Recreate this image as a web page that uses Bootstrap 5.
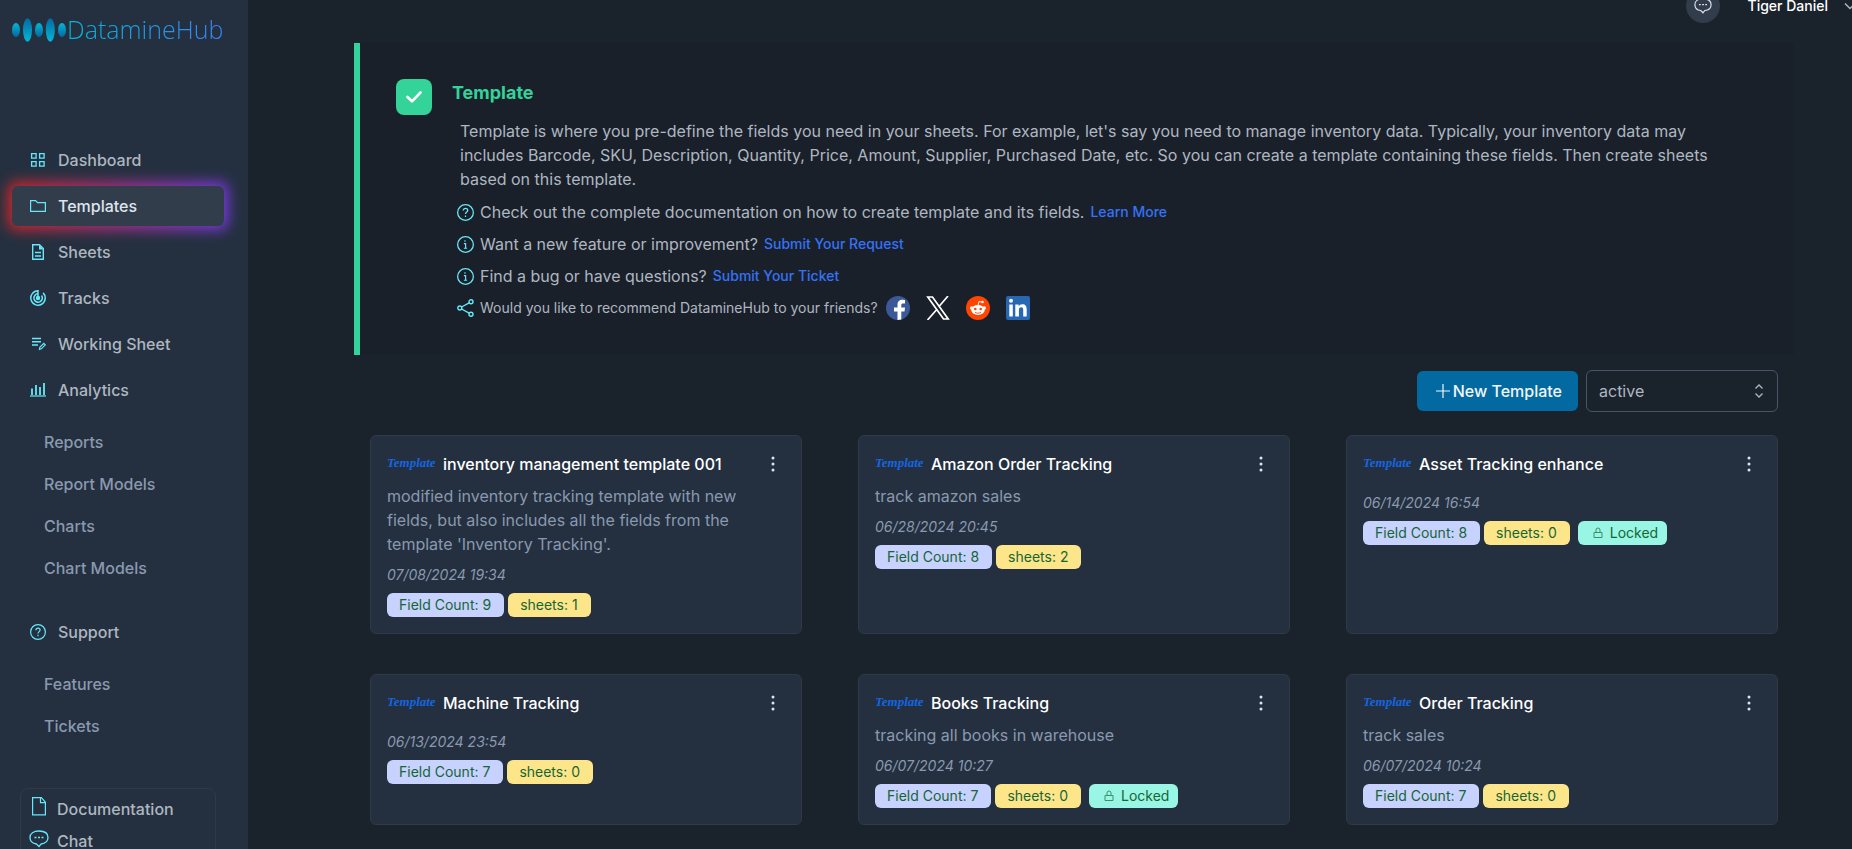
<!DOCTYPE html>
<html lang="en">
<head>
<meta charset="utf-8">
<meta name="viewport" content="width=device-width, initial-scale=1">
<title>DatamineHub – Templates</title>
<link href="https://cdn.jsdelivr.net/npm/bootstrap@5.3.0/dist/css/bootstrap.min.css" rel="stylesheet">
<style>
  body { background: #1a222c; color: #aeb7c0; font-family: Inter, "Liberation Sans", sans-serif; font-size: 16px; line-height: 24px; overflow: hidden; }
  a { text-decoration: none; }
  svg { flex: none; display: block; }
  .shell { height: 100vh; }
  .side { width: 248px; flex: none; background: #24303f; padding: 14px 12px 0; overflow: hidden; }
  .brand { height: 32px; margin-bottom: 94px; }
  .brand-name { font-family: "Open Sans", "Noto Sans", sans-serif; font-weight: 300; font-size: 25px; line-height: 30px; background: linear-gradient(to right, #06b6d4, #3b82f6); -webkit-background-clip: text; background-clip: text; color: transparent; }
  .side-list { gap: 6px; width: 212px; }
  .side-link { display: flex; align-items: center; gap: 12px; height: 40px; padding: 0 18px; border-radius: 6px; color: #aeb7c0; font-weight: 500; }
  .side-link svg, .ic { color: #67e8f9; }
  .on-wrap { position: relative; }
  .on-wrap::before { content: ""; position: absolute; inset: -4px; border-radius: 8px; background: linear-gradient(to right, #dc2626, #7c3aed); filter: blur(7px); opacity: .95; }
  .on-wrap .side-link { position: relative; background: #313d4a; color: #dee4ee; }
  .side-sub { padding: 20px 0 32px 32px; gap: 18px; }
  .side-sub a { color: #8a99af; font-weight: 500; }
  .side-foot { width: 196px; margin: 18px 0 0 8px; padding: 7px 8px; border: 1px solid #2e3a47; border-radius: 8px; gap: 8px; }
  .side-foot a { color: #aeb7c0; font-weight: 500; display: flex; gap: 8px; height: 24px; padding-top: 1px; }
  .content { min-width: 0; overflow: hidden; }
  .topbar { margin: -11px -4px 20px 0; height: 34px; }
  .round-btn { width: 34px; height: 34px; border: 0; padding: 0; border-radius: 50%; background: #313d4a; color: #dee4ee; }
  .user-btn { border: 0; background: none; padding: 0; margin-left: 28px; gap: 16px; color: #fff; font-size: 14px; font-weight: 500; line-height: 20px; }
  .page { padding: 0 58px 0 106px; }
  .intro { border-left: 6px solid #34d399; background: #1a202a; padding: 36px 36px 31px; gap: 20px; }
  .tick { width: 36px; height: 36px; border-radius: 8px; background: #34d399; flex: none; }
  .intro h1 { font-size: 18px; line-height: 28px; font-weight: 700; color: #34d399; margin: 0 0 12px; }
  .intro p { margin: 0 8px 5px; }
  .tip { height: 32px; padding-left: 5px; gap: 6px; }
  .tip a { font-size: 14px; font-weight: 500; color: #3572f6; }
  .tip-note { font-size: 14px; margin-right: 2px; }
  .share { margin-right: 10px; }
  .tools { gap: 8px; padding: 15px 16px 23px; }
  .add-btn { height: 40px; border: 0; border-radius: 6px; background: #0369a1; color: #f1f5f9; font-weight: 500; padding: 0 16px; }
  .state { width: 192px; height: 42px; border: 1px solid #475569; border-radius: 6px; color: #aeb7c0; padding: 0 12px; appearance: none;
    background: transparent url("data:image/svg+xml,%3Csvg xmlns='http://www.w3.org/2000/svg' width='16' height='16' fill='none' stroke='%23aeb7c0' stroke-width='1.3'%3E%3Cpath d='M4.5 5.5 8 2l3.500 3.500M4.500 10.500 8 14l3.500-3.500'/%3E%3C/svg%3E") no-repeat right 10px center; }
  .tiles { padding: 0 16px; display: grid; grid-template-columns: repeat(3, minmax(0, 1fr)); gap: 40px 56px; }
  .tile { background: #24303f; border: 1px solid #2e3a47; border-radius: 6px; padding: 16px; }
  .tag { font-family: "Liberation Serif", serif; font-style: italic; font-weight: 700; font-size: 13px; line-height: 22px; color: #1665e0; width: 48px; flex: none; }
  .tile h2 { font-size: 16px; line-height: 24px; font-weight: 500; color: #fff; margin: 0; }
  .dots { border: 0; padding: 0; background: none; color: #dee4ee; }
  .tile p { margin: 8px 40px 8px 0; color: #8a99af; }
  .tile time { display: block; font-size: 14px; line-height: 21px; font-style: italic; color: #8a99af; margin-bottom: 8px; }
  .pill { height: 24px; border-radius: 6px; padding: 0 13px 0 12px; font-size: 14px; color: #166534; display: inline-flex; align-items: center; }
  .pill-f { background: #c7d2fe; }
  .pill-s { background: #fde68a; }
  .pill-l { background: #99f6e4; margin-left: 4px; padding: 0 9px 0 14px; gap: 6px; }
  .pill-l svg { opacity: .7; }
</style>
</head>
<body>
<svg width="0" height="0" class="position-absolute" aria-hidden="true">
  <symbol id="chat" viewBox="0 0 20 20"><path d="M7.500 15C3.500 14.500 1 12 1 8.500 1 4.500 4.500 2 10 2s9 2.500 9 6.500-3 6-7 6.500l-2 2.500z" fill="none" stroke="currentColor" stroke-width="1.300"/><path d="M5.500 8.500h2m1.500 0h2m1.500 0h2" stroke="currentColor" stroke-width="1.300"/></symbol>
  <symbol id="ask" viewBox="0 0 16 16"><circle cx="8" cy="8" r="7.400" fill="none" stroke="currentColor" stroke-width="1.200"/><path d="M5.900 6.200c0-1.300.9-2.100 2.100-2.100s2.100.8 2.100 1.900C10.100 7.500 8 7.700 8 9.400M8 10.800v1.400" fill="none" stroke="currentColor" stroke-width="1.200"/></symbol>
  <symbol id="info" viewBox="0 0 16 16"><circle cx="8" cy="8" r="7.400" fill="none" stroke="currentColor" stroke-width="1.200"/><path d="M7.500 4v1.300M6.500 7.200h1.600v4M6.500 11.500h3" fill="none" stroke="currentColor" stroke-width="1.100"/></symbol>
  <symbol id="more" viewBox="0 0 24 24"><g fill="currentColor"><circle cx="12" cy="6" r="1.500"/><circle cx="12" cy="12" r="1.500"/><circle cx="12" cy="18" r="1.500"/></g></symbol>
  <symbol id="lock" viewBox="0 0 12 12"><path d="M2 5.500h8v5H2zM4 5.500V3a2 2 0 0 1 4 0v2.500" fill="none" stroke="currentColor" stroke-width="1"/></symbol>
</svg>
<div class="shell d-flex">
  <aside class="side">
    <a href="#" class="brand d-flex">
      <svg width="55" height="24" viewBox="0 0 55 24" class="mt-1">
        <defs>
          <linearGradient id="ga" x2="0" y2="1"><stop stop-color="#06b6d4"/><stop offset="1" stop-color="#0369a1"/></linearGradient>
          <linearGradient id="gb" x2="0" y2="1"><stop stop-color="#0369a1"/><stop offset="1" stop-color="#06b6d4"/></linearGradient>
        </defs>
        <ellipse cx="4" cy="12" rx="4" ry="7" fill="url(#ga)"/><ellipse cx="15.500" cy="12" rx="4.500" ry="11.700" fill="url(#gb)"/><ellipse cx="27" cy="12" rx="4" ry="7" fill="url(#ga)"/><ellipse cx="38.300" cy="12" rx="4.500" ry="11.700" fill="url(#gb)"/><ellipse cx="50" cy="12" rx="4" ry="7" fill="url(#ga)"/>
      </svg>
      <span class="brand-name">DatamineHub</span>
    </a>
    <nav>
      <div class="side-list d-flex flex-column">
        <a href="#" class="side-link"><svg width="16" height="16" fill="none" stroke="currentColor" stroke-width="1.300"><path d="M1.600 1.600h4.500v4.500H1.600zM9.600 1.600h4.500v4.500H9.600zM1.600 9.600h4.500v4.500H1.600zM9.600 9.600h4.500v4.500H9.600z"/></svg>Dashboard</a>
        <div class="on-wrap"><a href="#" class="side-link"><svg width="16" height="16" fill="none" stroke="currentColor" stroke-width="1.200"><path d="M.6 13.400V2.600h5l2 2h7.800v8.800z"/></svg>Templates</a></div>
        <a href="#" class="side-link"><svg width="16" height="16" fill="none" stroke="currentColor" stroke-width="1.400"><path d="M2.700.8h6.800l3.800 3.800v10.600H2.700zM5 8.500h6M5 12h6"/><path d="M9 1v4.500h4.500z" fill="currentColor" stroke="none"/></svg>Sheets</a>
        <a href="#" class="side-link"><svg width="16" height="16" fill="none" stroke="currentColor" stroke-width="1.500"><path d="M8 .8A7.200 7.200 0 1 0 13.100 2.900M8 3.800A4.200 4.200 0 1 0 11.500 5.500M8 0v8"/><circle cx="8" cy="8" r="1.500" fill="currentColor"/></svg>Tracks</a>
        <a href="#" class="side-link"><svg width="16" height="16" fill="none" stroke="currentColor" stroke-width="1.600"><path d="M2 2.500h9M2 5.800h9M2 9h6"/><path d="m9.500 13.300.3-2 4-4 1.500 1.500-4 4z" stroke-width="1.200"/></svg>Working Sheet</a>
        <a href="#" class="side-link"><svg width="16" height="16" fill="none" stroke="currentColor" stroke-width="1.800"><path d="M2 6.500V13M6 3v10M10 5v8M14 1v12"/><path d="M0 14h16" stroke-width="1.200"/></svg>Analytics</a>
      </div>
      <div class="side-sub d-flex flex-column"><a href="#">Reports</a><a href="#">Report Models</a><a href="#">Charts</a><a href="#">Chart Models</a></div>
      <a href="#" class="side-link"><svg width="16" height="16"><use href="#ask"/></svg>Support</a>
      <div class="side-sub d-flex flex-column"><a href="#">Features</a><a href="#">Tickets</a></div>
    </nav>
    <div class="side-foot d-flex flex-column">
      <a href="#"><svg class="ic" width="20" height="20" fill="none" stroke="currentColor" stroke-width="1.200"><path d="M3.600.7h8.800l4 4.500v12.700H3.600zM11.500.7v5h5"/></svg>Documentation</a>
      <a href="#"><svg class="ic" width="20" height="20"><use href="#chat"/></svg>Chat</a>
    </div>
  </aside>
  <div class="content flex-grow-1">
    <header class="topbar d-flex align-items-center justify-content-end">
      <button class="round-btn d-flex align-items-center justify-content-center" aria-label="Messages"><svg width="18" height="18"><use href="#chat"/></svg></button>
      <button class="user-btn d-flex align-items-center">Tiger Daniel<svg width="12" height="8" fill="none" stroke="#aeb7c0" stroke-width="1.500"><path d="m1 1.500 5 5 5-5"/></svg></button>
    </header>
    <main class="page">
      <section class="intro d-flex">
        <div class="tick d-flex align-items-center justify-content-center"><svg width="16" height="12" fill="none" stroke="#fff" stroke-width="2.600" stroke-linecap="round" stroke-linejoin="round"><path d="m1.500 6 4.500 4.300 8.500-8.800"/></svg></div>
        <div class="flex-grow-1">
          <h1>Template</h1>
          <p>Template is where you pre-define the fields you need in your sheets. For example, let's say you need to manage inventory data. Typically, your inventory data may includes Barcode, SKU, Description, Quantity, Price, Amount, Supplier, Purchased Date, etc. So you can create a template containing these fields. Then create sheets based on this template.</p>
          <div class="tip d-flex align-items-center"><svg class="ic" width="17" height="17"><use href="#ask"/></svg><span>Check out the complete documentation on how to create template and its fields.</span><a href="#">Learn More</a></div>
          <div class="tip d-flex align-items-center"><svg class="ic" width="17" height="17"><use href="#info"/></svg><span>Want a new feature or improvement?</span><a href="#">Submit Your Request</a></div>
          <div class="tip d-flex align-items-center"><svg class="ic" width="17" height="17"><use href="#info"/></svg><span>Find a bug or have questions?</span><a href="#">Submit Your Ticket</a></div>
          <div class="tip d-flex align-items-center"><svg class="ic" width="17" height="18" fill="none" stroke="currentColor" stroke-width="1.400"><circle cx="2.800" cy="9" r="2"/><circle cx="14" cy="2.800" r="2"/><circle cx="14" cy="15.200" r="2"/><path d="m4.600 8 7.600-4.200M4.600 10l7.600 4.200"/></svg><span class="tip-note">Would you like to recommend DatamineHub to your friends?</span>
            <a href="#" class="share" aria-label="Facebook"><svg width="24" height="24"><circle cx="12" cy="12" r="12" fill="#3b5998"/><path d="M11.500 24v-8.500H8v-4h3.500V9c0-3.600 2-5.200 5-5.200l2.500.2v3.400h-2c-1.300 0-1.700.7-1.700 1.700v2.400H19l-.5 4h-3.200V23.500z" fill="#fff"/></svg></a>
            <a href="#" class="share" aria-label="X"><svg width="24" height="24" fill="none" stroke="#fff" stroke-width="1.700"><path d="M1.800 1h4.700l15.700 22h-4.700zM22 0l-9 10.500M10.800 13.500 1.500 24"/></svg></a>
            <a href="#" class="share" aria-label="Reddit"><svg width="24" height="24"><circle cx="12" cy="12" r="12" fill="#ff4500"/><g fill="#fff"><ellipse cx="12" cy="14" rx="6.700" ry="4.900"/><circle cx="5.700" cy="12" r="1.700"/><circle cx="18.300" cy="12" r="1.700"/><circle cx="16.500" cy="6" r="1.300"/></g><path d="m12 9.500 1-4 3.500.7" fill="none" stroke="#fff" stroke-width=".9"/><circle cx="9.300" cy="13" r="1.300" fill="#ff4500"/><circle cx="14.700" cy="13" r="1.300" fill="#ff4500"/><path d="M9 16.200c1.800 1.300 4.200 1.300 6 0" fill="none" stroke="#ff4500" stroke-width=".9"/></svg></a>
            <a href="#" class="share" aria-label="LinkedIn"><svg width="24" height="24"><rect width="24" height="24" rx="2" fill="#2867b2"/><g fill="#fff"><circle cx="5" cy="4.700" r="2"/><path d="M3.300 8.500h3.500v12H3.300zM9.300 8.500h3.400v1.700c.7-1.200 1.900-2 3.500-2 3.400 0 4.500 2 4.500 5.300v7h-3.500v-6.200c0-1.700-.3-3-2-3s-2.300 1.200-2.300 3v6.200H9.300z"/></g></svg></a>
          </div>
        </div>
      </section>
      <div class="tools d-flex align-items-center justify-content-end">
        <button class="add-btn d-flex align-items-center"><svg width="20" height="20" fill="none" stroke="currentColor" stroke-width="1.200"><path d="M10 3v14M3 10h14"/></svg>New Template</button>
        <select class="state" aria-label="Status"><option>active</option><option>archived</option></select>
      </div>
      <section class="tiles">
        <article class="tile"><div class="d-flex gap-2"><span class="tag">Template</span><h2 class="flex-grow-1">inventory management template 001</h2><button class="dots" aria-label="More"><svg width="24" height="24"><use href="#more"/></svg></button></div><p>modified inventory tracking template with new fields, but also includes all the fields from the template 'Inventory Tracking'.</p><time>07/08/2024 19:34</time><div class="d-flex gap-1"><span class="pill pill-f">Field Count: 9</span><span class="pill pill-s">sheets: 1</span></div></article>
        <article class="tile"><div class="d-flex gap-2"><span class="tag">Template</span><h2 class="flex-grow-1">Amazon Order Tracking</h2><button class="dots" aria-label="More"><svg width="24" height="24"><use href="#more"/></svg></button></div><p>track amazon sales</p><time>06/28/2024 20:45</time><div class="d-flex gap-1"><span class="pill pill-f">Field Count: 8</span><span class="pill pill-s">sheets: 2</span></div></article>
        <article class="tile"><div class="d-flex gap-2 mb-3"><span class="tag">Template</span><h2 class="flex-grow-1">Asset Tracking enhance</h2><button class="dots" aria-label="More"><svg width="24" height="24"><use href="#more"/></svg></button></div><time>06/14/2024 16:54</time><div class="d-flex gap-1"><span class="pill pill-f">Field Count: 8</span><span class="pill pill-s">sheets: 0</span><span class="pill pill-l"><svg width="12" height="12"><use href="#lock"/></svg>Locked</span></div></article>
        <article class="tile"><div class="d-flex gap-2 mb-3"><span class="tag">Template</span><h2 class="flex-grow-1">Machine Tracking</h2><button class="dots" aria-label="More"><svg width="24" height="24"><use href="#more"/></svg></button></div><time>06/13/2024 23:54</time><div class="d-flex gap-1"><span class="pill pill-f">Field Count: 7</span><span class="pill pill-s">sheets: 0</span></div></article>
        <article class="tile"><div class="d-flex gap-2"><span class="tag">Template</span><h2 class="flex-grow-1">Books Tracking</h2><button class="dots" aria-label="More"><svg width="24" height="24"><use href="#more"/></svg></button></div><p>tracking all books in warehouse</p><time>06/07/2024 10:27</time><div class="d-flex gap-1"><span class="pill pill-f">Field Count: 7</span><span class="pill pill-s">sheets: 0</span><span class="pill pill-l"><svg width="12" height="12"><use href="#lock"/></svg>Locked</span></div></article>
        <article class="tile"><div class="d-flex gap-2"><span class="tag">Template</span><h2 class="flex-grow-1">Order Tracking</h2><button class="dots" aria-label="More"><svg width="24" height="24"><use href="#more"/></svg></button></div><p>track sales</p><time>06/07/2024 10:24</time><div class="d-flex gap-1"><span class="pill pill-f">Field Count: 7</span><span class="pill pill-s">sheets: 0</span></div></article>
      </section>
    </main>
  </div>
</div>
<script src="https://cdn.jsdelivr.net/npm/bootstrap@5.3.0/dist/js/bootstrap.bundle.min.js"></script>
</body>
</html>
